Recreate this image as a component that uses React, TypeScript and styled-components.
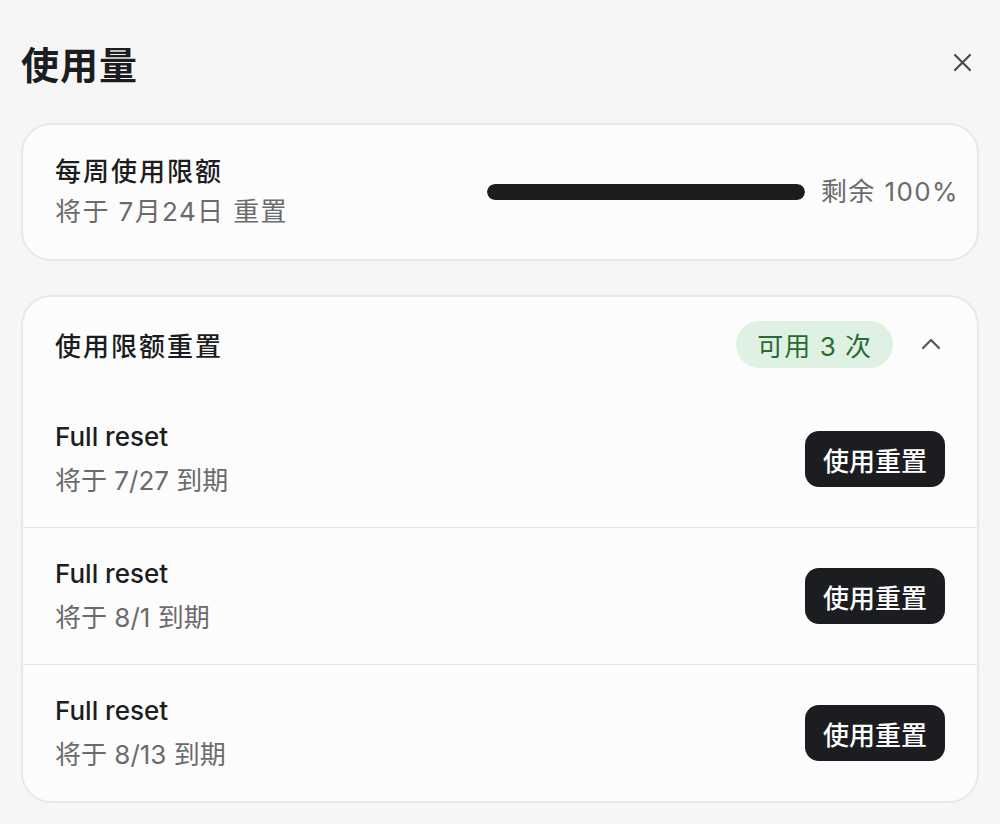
import styled, { createGlobalStyle } from "styled-components";

const GlobalStyle = createGlobalStyle`
  body {
    margin: 0;
    background: #f6f6f6;
    font-family: "Inter", "Noto Sans CJK SC", sans-serif;
    color: #1c1d20;
  }
`;

const Container = styled.div`
  padding: 36px 21px 22px;
  display: flex;
  flex-direction: column;
  gap: 34px;
`;
const Header = styled.header`
  display: flex;
  justify-content: space-between;
  align-items: center;
  height: 52px;
  margin-bottom: 1px;
`;
const Title = styled.h1`
  margin: 0;
  font-size: 38px;
  font-weight: 700;
  letter-spacing: 1px;
`;
const CloseButton = styled.button`
  border: none;
  background: none;
  padding: 0;
  margin-right: 7px;
  display: flex;
  color: #4a4a50;
`;
const Card = styled.section`
  background: #fcfcfc;
  border: 2px solid #e8e8e8;
  border-radius: 30px;
  overflow: hidden;
`;
const LimitRow = styled.div`
  height: 134px;
  padding: 0 18px 0 32px;
  display: flex;
  align-items: center;
  justify-content: space-between;
`;
const TextBlock = styled.div<{ $gap?: number }>`
  display: flex;
  flex-direction: column;
  gap: ${(p) => p.$gap ?? 8}px;
`;
const Name = styled.div<{ $cjk?: boolean }>`
  font-size: 26px;
  line-height: 32px;
  font-weight: 500;
  letter-spacing: ${(p) => (p.$cjk ? "2px" : "0")};
`;
const Sub = styled.div<{ $wide?: boolean }>`
  font-size: 26px;
  line-height: 32px;
  color: #6b6b6e;
  letter-spacing: ${(p) => (p.$wide ? "1.4px" : "0")};
`;
const Meter = styled.div`
  display: flex;
  align-items: center;
  gap: 16px;
`;
const Bar = styled.div`
  width: 318px;
  height: 16px;
  border-radius: 8px;
  background: #e4e4e6;
  overflow: hidden;
`;
const Fill = styled.div`
  height: 100%;
  background: #1c1d20;
  border-radius: 8px;
`;
const SectionHead = styled.div`
  height: 94px;
  padding: 0 36px 0 32px;
  display: flex;
  align-items: center;
  gap: 28px;
`;
const SectionTitle = styled.div`
  flex: 1;
  font-size: 26px;
  font-weight: 500;
  letter-spacing: 2px;
`;
const Badge = styled.span`
  background: #dff1e3;
  color: #2a6a33;
  font-size: 26px;
  height: 47px;
  padding: 0 21px;
  border-radius: 24px;
  display: flex;
  align-items: center;
  letter-spacing: 1px;
`;
const Chevron = styled.span`
  display: flex;
  color: #555558;
`;
const ResetRow = styled.div`
  height: 136px;
  padding: 0 32px;
  display: flex;
  align-items: center;
  justify-content: space-between;
  & + & {
    border-top: 1px solid #e6e6e6;
  }
`;
const UseButton = styled.button`
  height: 56px;
  padding: 0 18px;
  border: none;
  border-radius: 14px;
  background: #1c1d20;
  color: #fff;
  font-family: inherit;
  font-size: 26px;
  font-weight: 500;
`;

const resets = [
  { id: 1, expires: "7/27" },
  { id: 2, expires: "8/1" },
  { id: 3, expires: "8/13" },
];

function App() {
  const remaining = 100;
  return (
    <>
      <GlobalStyle />
      <Container>
        <Header>
          <Title>使用量</Title>
          <CloseButton aria-label="close">
            <svg width="19" height="19" viewBox="0 0 19 19" fill="none" stroke="currentColor" strokeWidth="2.2" strokeLinecap="round">
              <path d="M2 2L17 17M17 2L2 17" />
            </svg>
          </CloseButton>
        </Header>
        <Card>
          <LimitRow>
            <TextBlock $gap={8}>
              <Name $cjk>每周使用限额</Name>
              <Sub $wide>将于 7月24日 重置</Sub>
            </TextBlock>
            <Meter>
              <Bar>
                <Fill style={{ width: `${remaining}%` }} />
              </Bar>
              <Sub $wide>剩余 {remaining}%</Sub>
            </Meter>
          </LimitRow>
        </Card>
        <Card>
          <SectionHead>
            <SectionTitle>使用限额重置</SectionTitle>
            <Badge>可用 3 次</Badge>
            <Chevron>
              <svg width="20" height="12" viewBox="0 0 20 12" fill="none" stroke="currentColor" strokeWidth="2.2" strokeLinecap="round" strokeLinejoin="round">
                <path d="M2 10L10 2L18 10" />
              </svg>
            </Chevron>
          </SectionHead>
          {resets.map((r) => (
            <ResetRow key={r.id}>
              <TextBlock $gap={12}>
                <Name>Full reset</Name>
                <Sub>将于 {r.expires} 到期</Sub>
              </TextBlock>
              <UseButton>使用重置</UseButton>
            </ResetRow>
          ))}
        </Card>
      </Container>
    </>
  );
}
export default App;
